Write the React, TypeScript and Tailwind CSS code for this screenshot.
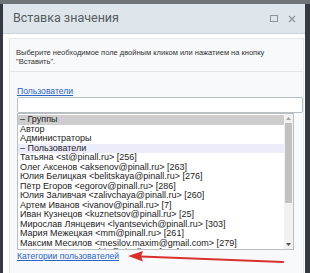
import React from 'react';

const rows: { text: string; kind?: 'selected' | 'group' }[] = [
  { text: '– Группы', kind: 'selected' },
  { text: 'Автор' },
  { text: 'Администраторы' },
  { text: '– Пользователи', kind: 'group' },
  { text: 'Татьяна <st@pinall.ru> [256]' },
  { text: 'Олег Аксенов <aksenov@pinall.ru> [263]' },
  { text: 'Юлия Белицкая <belitskaya@pinall.ru> [276]' },
  { text: 'Пётр Егоров <egorov@pinall.ru> [286]' },
  { text: 'Юлия Заливчая <zalivchaya@pinall.ru> [260]' },
  { text: 'Артем Иванов <ivanov@pinall.ru> [7]' },
  { text: 'Иван Кузнецов <kuznetsov@pinall.ru> [25]' },
  { text: 'Мирослав Лянцевич <lyantsevich@pinall.ru> [303]' },
  { text: 'Мария Межецкая <mm@pinall.ru> [261]' },
  { text: 'Максим Месилов <mesilov.maxim@gmail.com> [279]' },
  { text: 'Никита Мухин <muhin@pinall.ru> [287]' },
];

const App: React.FC = () => {
  return (
    <div className="w-[310px] h-[273px] overflow-hidden bg-[#353a40] flex flex-col font-['Liberation_Sans',sans-serif]">
      {/* page behind the overlay */}
      <div className="h-[4px] bg-[#6f7479] shrink-0" />

      <div className="flex-1 ml-[3px] mr-[5px] bg-white flex flex-col min-h-0">
        {/* title bar */}
        <div className="h-[30px] shrink-0 bg-[#dfe6eb] border-b border-[#c7d1d8] flex items-center justify-between pl-[10px] pr-[9px]">
          <span className="text-[12.5px] text-[#555b60] leading-none font-['Roboto',sans-serif]">
            Вставка значения
          </span>
          <div className="flex items-center gap-[10px]">
            <span className="block w-[8px] h-[7px] border border-[#8d969c]" />
            <svg width="8" height="8" viewBox="0 0 8 8">
              <path d="M1 1L7 7M7 1L1 7" stroke="#8d969c" strokeWidth="1.3" />
            </svg>
          </div>
        </div>

        {/* body */}
        <div className="flex-1 pl-[6px] pr-[1px] pt-[4px] min-h-0">
          <div className="h-full border border-[#e2e7ea] border-b-0 bg-[#f7f9fa] flex flex-col">
            <div className="px-[6px] pt-[10px] pb-[5px] text-[7.5px] leading-[8.5px] text-[#333] border-b border-[#e2e7ea]">
              Выберите необходимое поле двойным кликом или нажатием на кнопку
              <br />
              "Вставить".
            </div>

            <div className="relative pl-[7px] pt-[14px]">
              <a className="text-[8.6px] leading-[10px] text-[#2d64c4] underline block w-fit">Пользователи</a>
              <div className="mt-[1px] h-[16px] bg-white border border-[#b9bec2] rounded-[2px]" />
              <div className="w-[277px] h-[137px] bg-white border border-[#b9bec2] flex overflow-hidden">
                <div className="flex-1 overflow-hidden pt-[1px]">
                  {rows.map((r, i) => (
                    <div
                      key={i}
                      className={
                        'h-[9.5px] leading-[9.5px] text-[9px] whitespace-nowrap pl-[2px] text-[#222] ' +
                        (r.kind === 'selected'
                          ? 'bg-[#cdcdcd]'
                          : r.kind === 'group'
                          ? 'bg-[#ececfb]'
                          : '')
                      }
                    >
                      {r.text}
                    </div>
                  ))}
                </div>
                <div className="w-[9px] bg-[#f1f1f1] flex flex-col items-center shrink-0">
                  <div className="h-[9px] flex items-center justify-center">
                    <svg width="5" height="3" viewBox="0 0 5 3"><path d="M0 3L2.5 0L5 3Z" fill="#a3a3a3" /></svg>
                  </div>
                  <div className="w-[7px] h-[80px] bg-[#c1c1c1]" />
                  <div className="flex-1" />
                  <div className="h-[9px] flex items-center justify-center">
                    <svg width="5" height="3" viewBox="0 0 5 3"><path d="M0 0L2.5 3L5 0Z" fill="#505050" /></svg>
                  </div>
                </div>
              </div>
              <a className="mt-[1px] text-[8.6px] leading-[10px] text-[#2d64c4] underline block w-fit">
                Категории пользователей
              </a>

              {/* annotation arrow */}
              <svg
                className="absolute left-[116px] top-[178px]"
                width="170"
                height="16"
                viewBox="0 0 170 16"
              >
                <path d="M15 6.5 L157 12" stroke="#d8312d" strokeWidth="2.2" strokeLinecap="round" />
                <path d="M2 6 L17 1 L15 6.5 L17 11.5 Z" fill="#d8312d" />
              </svg>
            </div>
          </div>
        </div>
      </div>
    </div>
  );
};

export default App;
